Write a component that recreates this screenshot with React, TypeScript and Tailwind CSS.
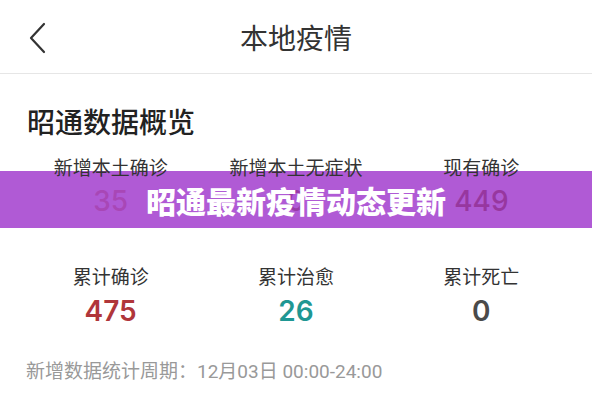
import React from "react";

const cjk = { fontFamily: '"Noto Sans CJK SC", "Noto Sans", sans-serif' };
const num = { fontFamily: 'Inter, "Noto Sans CJK SC", sans-serif' };

function Stat({ label, value, color, weight, gap, z }: { label: string; value: string; color: string; weight: string; gap: string; z?: boolean }) {
  return (
    <div className={`flex flex-col items-center ${z ? "relative z-20" : ""}`}>
      <div className="text-[19px] leading-[24px] text-[#333]" style={cjk}>{label}</div>
      <div className={`${gap} text-[28px] leading-[34px] ${weight}`} style={{ ...num, color }}>{value}</div>
    </div>
  );
}

export default function App() {
  return (
    <div className="relative w-[592px] h-[400px] bg-white overflow-hidden" style={cjk}>
      <header className="relative h-[74px] border-b border-[#e6e6e6] flex items-center justify-center">
        <svg className="absolute left-[28px] top-[22px]" width="20" height="32" viewBox="0 0 20 32" fill="none">
          <path d="M16 2 L3 16 L16 30" stroke="#333" strokeWidth="2.2" strokeLinecap="round" strokeLinejoin="round" />
        </svg>
        <h1 className="text-[28px] leading-[32px] text-[#333] font-normal">本地疫情</h1>
      </header>

      <div className="px-[27px] pt-[30px]">
        <h2 className="text-[28px] leading-[34px] text-[#222] font-medium">昭通数据概览</h2>
      </div>

      <div className="px-[18px] pt-[17px] grid grid-cols-3">
        <Stat label="新增本土确诊" value="35" color="#a847b6" weight="font-medium" gap="mt-[5px]" z />
        <Stat label="新增本土无症状" value="0" color="#9a3aa6" weight="font-medium" gap="mt-[5px]" z />
        <Stat label="现有确诊" value="449" color="#97379f" weight="font-medium" gap="mt-[5px]" z />
      </div>

      <div className="px-[18px] pt-[46px] grid grid-cols-3">
        <Stat label="累计确诊" value="475" color="#b0363a" weight="font-semibold" gap="mt-[6px]" />
        <Stat label="累计治愈" value="26" color="#1f9793" weight="font-semibold" gap="mt-[6px]" />
        <Stat label="累计死亡" value="0" color="#4a4a4a" weight="font-semibold" gap="mt-[6px]" />
      </div>

      <div className="px-[26px] pt-[32px] text-[19px] leading-[24px] text-[#999]" style={{ fontFamily: 'Roboto, "Noto Sans CJK SC", sans-serif' }}>
        新增数据统计周期：12月03日 00:00-24:00
      </div>

      <div className="absolute left-0 right-0 top-[171px] h-[57px] bg-[#b05ad5] z-10" />
      <div className="absolute left-0 right-0 top-[171px] h-[57px] z-30 flex items-center justify-center">
        <span className="text-[30px] leading-[36px] font-black text-white" style={cjk}>昭通最新疫情动态更新</span>
      </div>
    </div>
  );
}
